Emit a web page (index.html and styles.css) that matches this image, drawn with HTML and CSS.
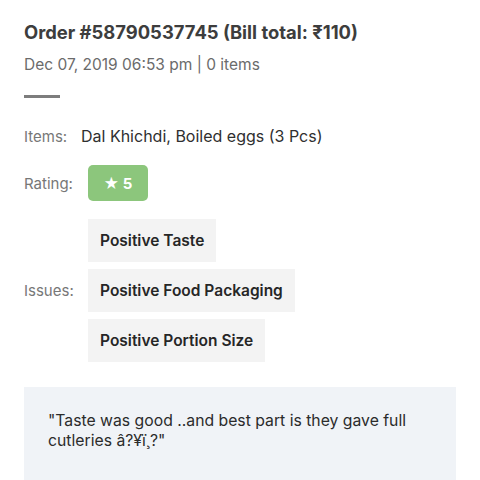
FILE: index.html
```html
<!DOCTYPE html>
<html>
<head>
<meta charset="utf-8">
<link rel="stylesheet" href="styles.css">
</head>
<body>
<div class="card">
  <h1 class="title">Order #58790537745 (Bill total: ₹110)</h1>
  <div class="meta">Dec 07, 2019 06:53 pm | 0 items</div>
  <div class="divider"></div>
  <div class="row items-row">
    <span class="label">Items:</span>
    <span class="value">Dal Khichdi, Boiled eggs (3 Pcs)</span>
  </div>
  <div class="row rating-row">
    <span class="label">Rating:</span>
    <span class="badge">★ 5</span>
  </div>
  <div class="row issues-row">
    <span class="label">Issues:</span>
    <div class="tags">
      <span class="tag">Positive Taste</span>
      <span class="tag">Positive Food Packaging</span>
      <span class="tag">Positive Portion Size</span>
    </div>
  </div>
  <div class="review">"Taste was good ..and best part is they gave full cutleries â?¥ï¸?"</div>
</div>
</body>
</html>
```
FILE: styles.css
```css
* { box-sizing: border-box; }
body {
  margin: 0;
  background: #fff;
  font-family: Inter, Lato, sans-serif;
}
.card {
  padding: 19px 24px 0 24px;
}
.title {
  margin: 0;
  font-size: 18.4px;
  font-weight: 700;
  color: #3d3d3d;
  line-height: 26px;
}
.meta {
  margin-top: 10px;
  font-size: 15.5px;
  color: #6b6b6b;
  line-height: 20px;
}
.divider {
  margin-top: 20px;
  width: 36px;
  height: 3px;
  background: #7d7d7d;
}
.row {
  display: flex;
  align-items: center;
}
.label {
  font-size: 15px;
  color: #777;
  width: 64px;
  flex: none;
}
.items-row {
  margin-top: 28px;
}
.items-row .label { width: 57px; }
.value {
  font-size: 16px;
  color: #2f2f2f;
}
.rating-row {
  margin-top: 19px;
}
.badge {
  width: 60px;
  height: 36px;
  border-radius: 5px;
  background: #8cc67c;
  color: #fff;
  font-weight: 700;
  font-size: 15px;
  display: flex;
  align-items: center;
  justify-content: center;
}
.issues-row {
  margin-top: 18px;
}
.tags {
  display: flex;
  flex-direction: column;
  align-items: flex-start;
  gap: 7px;
}
.tag {
  background: #f3f3f3;
  height: 43px;
  padding: 0 12px;
  display: flex;
  align-items: center;
  font-size: 15.5px;
  font-weight: 600;
  color: #262626;
}
.review {
  margin-top: 25px;
  width: 432px;
  background: #f0f3f7;
  padding: 24px 24px 40px 24px;
  font-size: 15.75px;
  line-height: 20px;
  color: #2b2b2b;
}
```
